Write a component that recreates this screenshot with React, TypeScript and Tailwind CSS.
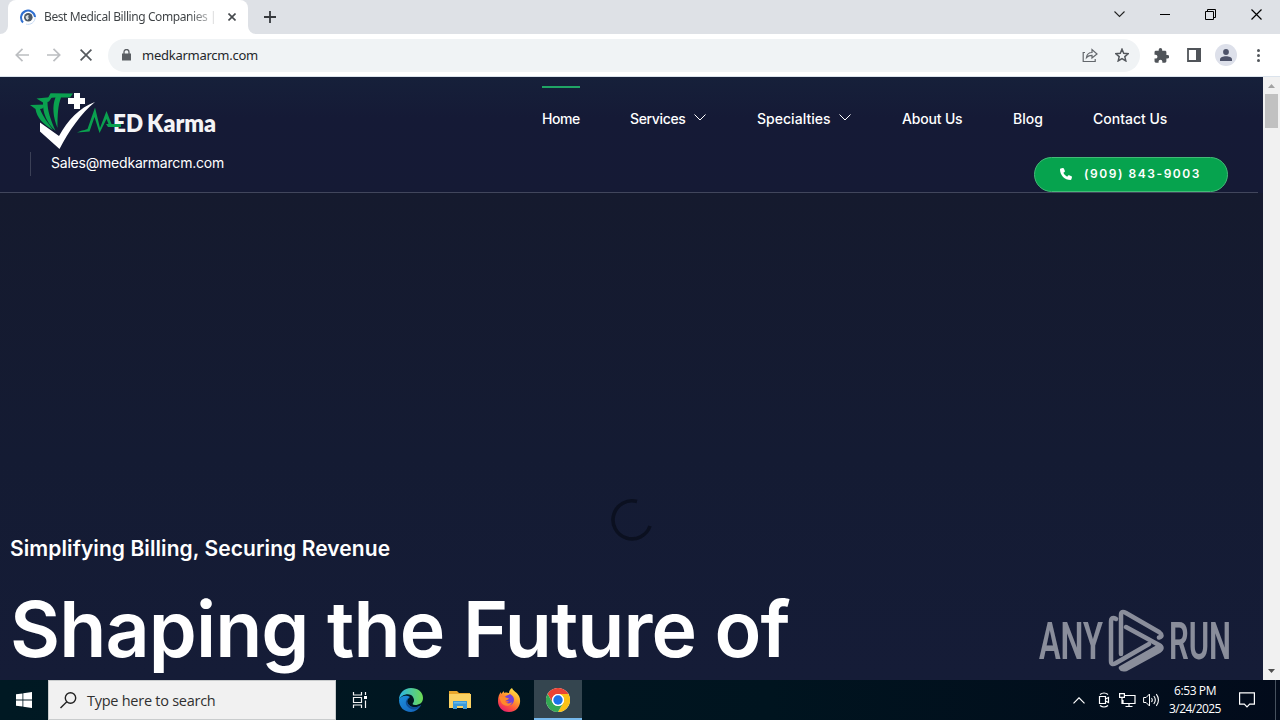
import type { ReactNode } from "react";

function Ico({ w, h, box, children, className = "" }: { w: number; h: number; box?: string; children: ReactNode; className?: string }) {
  return (
    <svg width={w} height={h} viewBox={box ?? `0 0 ${w} ${h}`} fill="none" className={`block shrink-0 ${className}`}>
      {children}
    </svg>
  );
}

function TabStrip() {
  return (
    <div className="flex h-[34px] shrink-0 items-start bg-[#dee1e6] pl-2">
      <div className="relative flex h-[34px] w-60 items-center rounded-t-lg bg-white pl-3">
        <Ico w={8} h={8} className="absolute -left-2 bottom-0"><path d="M8 0v8H0a8 8 0 0 0 8-8z" fill="#fff" /></Ico>
        <Ico w={8} h={8} className="absolute -right-2 bottom-0"><path d="M0 0v8h8a8 8 0 0 1-8-8z" fill="#fff" /></Ico>
        <Ico w={16} h={16}>
          <path d="M3 13.500A7 7 0 1 1 15 8" stroke="#2f6fd0" strokeWidth="2" />
          <path d="M6 15.1A7.2 7.2 0 0 0 15.2 8" stroke="#c5d9f5" strokeWidth="1" />
          <circle cx="8.300" cy="8.300" r="4.300" fill="#4d5966" />
          <path d="M5.500 7.500l2-1.500 1.500.6-1 1.500 1 1.200-1.500 1.700-1.500-1.200z" fill="#d5dde2" />
        </Ico>
        <div className="ml-2 w-[176px] whitespace-nowrap bg-linear-to-r from-[#3c4043] from-82% to-transparent to-100% bg-clip-text font-['Noto_Sans',sans-serif] text-[12px] leading-4 tracking-[-0.420px] text-transparent">
          Best Medical Billing Companies |
        </div>
        <Ico w={8} h={8} className="ml-2"><path d="M.5.5l7 7M7.5.5l-7 7" stroke="#45494d" strokeWidth="1.6" /></Ico>
      </div>
      <Ico w={12} h={12} className="mt-[11px] ml-4"><path d="M6 0v12M0 6h12" stroke="#36393d" strokeWidth="1.8" /></Ico>
      <div className="flex-1" />
      <div className="flex h-7 items-center gap-[35px] pr-[18px]">
        <Ico w={11} h={7}><path d="M.5.5l5 5 5-5" stroke="#222" strokeWidth="1.1" /></Ico>
        <Ico w={10} h={2}><path d="M0 1.500h10" stroke="#000" /></Ico>
        <Ico w={11} h={11}><path d="M.5 2.500h8v8h-8zM2.500 2.500v-2h8v8h-2" stroke="#000" /></Ico>
        <Ico w={11} h={11}><path d="M.5.5l10 10M10.500.5l-10 10" stroke="#000" strokeWidth="1.2" /></Ico>
      </div>
    </div>
  );
}

function Toolbar() {
  return (
    <div className="flex h-[43px] shrink-0 items-center border-b border-[#dbe3ec] bg-white pl-[15px]">
      <Ico w={14} h={14}><path d="M14 7H1.500M7.500.8L1.300 7l6.200 6.200" stroke="#bcbec1" strokeWidth="1.700" /></Ico>
      <Ico w={14} h={14} className="ml-[18px]"><path d="M0 7h12.500M6.500.8L12.700 7l-6.200 6.200" stroke="#bcbec1" strokeWidth="1.700" /></Ico>
      <Ico w={12} h={12} className="ml-[19px]"><path d="M.6.6l10.800 10.800M11.400.6L.6 11.400" stroke="#55595e" strokeWidth="1.700" /></Ico>
      <div className="ml-4 flex h-[33px] w-[1032px] items-center rounded-full bg-[#f0f3f5] pl-[14px]">
        <Ico w={9} h={12}><path d="M0 4.500h9v7H0z" fill="#5a5e63" /><path d="M2 5V3a2.500 2.500 0 0 1 5 0v2" stroke="#5a5e63" strokeWidth="1.300" /></Ico>
        <span className="ml-[11px] font-['Noto_Sans',sans-serif] text-[13px] leading-5 tracking-[-0.260px] text-[#24272b]">medkarmarcm.com</span>
        <div className="flex-1" />
        <Ico w={16} h={14}>
          <path d="M3 4.500H1.200v9h12V11" stroke="#63676c" strokeWidth="1.200" />
          <path d="M4.500 9.500c.5-3.500 2.500-5 5.500-5V1.500l5 4.500-5 4V7.300c-2.500 0-4 .5-5.500 2.200z" stroke="#63676c" strokeWidth="1.200" />
        </Ico>
        <Ico w={14} h={14} className="mr-[11px] ml-[17px]"><path d="M7 1.200l1.700 4.100 4.500.4-3.400 2.900 1 4.300L7 10.600l-3.800 2.300 1-4.300L.8 5.700l4.500-.4z" stroke="#53575c" strokeWidth="1.500" /></Ico>
      </div>
      <Ico w={15} h={15} box="1.500 1 21 21.500" className="ml-[14px]">
        <path d="M20.500 11H19V7c0-1.100-.9-2-2-2h-4V3.500a2.500 2.500 0 0 0-5 0V5H4a2 2 0 0 0-2 2v3.800h1.500a2.700 2.700 0 0 1 0 5.400H2V20c0 1.100.9 2 2 2h3.800v-1.500a2.700 2.700 0 0 1 5.400 0V22H17c1.100 0 2-.9 2-2v-4h1.500a2.500 2.500 0 0 0 0-5z" fill="#505459" />
      </Ico>
      <Ico w={14} h={14} className="ml-[18px]"><path d="M1 1h12v12H1z" stroke="#505459" strokeWidth="1.800" /><path d="M9 0h5v14H9z" fill="#505459" /></Ico>
      <div className="ml-[14px] flex size-[22px] items-center justify-center rounded-full bg-[#dde0ea]">
        <Ico w={12} h={12}><circle cx="6" cy="3" r="2.900" fill="#4d5269" /><path d="M0 12v-1.500C0 8.300 3 7.300 6 7.300s6 1 6 3.200V12z" fill="#4d5269" /></Ico>
      </div>
      <Ico w={4} h={14} className="ml-[20px]"><circle cx="1.500" cy="2.500" r="1.500" fill="#53575c" /><circle cx="1.500" cy="7.500" r="1.500" fill="#53575c" /><circle cx="1.500" cy="12.500" r="1.500" fill="#53575c" /></Ico>
    </div>
  );
}

function Logo() {
  return (
    <svg width="188" height="60" viewBox="0 0 188 60" className="block">
      <g fill="#0aa14f">
        <path d="M20.500 .3L43 .6 40 4.600 31 4.600C28 12 27.500 22 27.500 35C23 24 22 13 25.500 4.600L18 5z" />
        <path d="M6.500 5.500L22 4 19 8.500 17.500 9C17.500 18 20.500 26 25.500 38C17 30 12.500 20 13 9.500z" />
        <path d="M0 12L15.500 11.500 12.500 15.500 10 16C12.500 23 17.500 29 23 37C13 31 7 25 5.500 16z" />
      </g>
      <path d="M44 0h6v5h5v6h-5v5h-6v-5h-6V5h6z" fill="#fff" />
      <path d="M10 29.500L29 43C38 27 49 15 65 9C51 20 39 38 29.500 56L10 38.500z" fill="#fff" />
      <g fill="#0aa14f">
        <path d="M47 39.500C52 37 56 37 57.500 36L65 14.500L70 35L76.500 18L81.500 31H91V33.500H79.500L76.500 26L69.500 40L64.500 24L59.500 38.500Z" />
      </g>
      <text x="83" y="39" textLength="30" lengthAdjust="spacingAndGlyphs" fontFamily="Lato, sans-serif" fontWeight="800" fontSize="25" fill="#f4f4f6">ED</text>
      <path d="M76 31h15v3H78z" fill="#0aa14f" />
      <text x="117" y="39" textLength="69" lengthAdjust="spacingAndGlyphs" fontFamily="Lato, sans-serif" fontWeight="800" fontSize="24.500" fill="#f4f4f6">Karma</text>
    </svg>
  );
}

function Chevron() {
  return <Ico w={12} h={7} className="mr-px mb-[3px]"><path d="M.5.5L6 6 11.500.5" stroke="#fff" /></Ico>;
}

function Header() {
  return (
    <header className="mr-[5px] h-[116px] shrink-0 border-b border-[#41465c]">
      <div className="flex h-[73px]">
        <div className="w-[542px] pt-4 pl-[30px]"><Logo /></div>
        <nav className="flex h-[84px] text-[14px] leading-5 font-medium whitespace-nowrap text-white">
          <div className="mt-[9px] w-[38px] border-t-2 border-[#20a565] pt-[21px] tracking-[-0.450px]">Home</div>
          <div className="ml-[50px] flex h-[84px] w-[77px] items-center justify-between"><span className="tracking-[-0.360px]">Services</span><Chevron /></div>
          <div className="ml-[50px] flex h-[84px] w-[95px] items-center justify-between"><span className="tracking-[0.030px]">Specialties</span><Chevron /></div>
          <div className="ml-[50px] flex w-[61px] items-center tracking-[-0.180px]">About Us</div>
          <div className="ml-[50px] flex w-[30px] items-center tracking-[0.050px]">Blog</div>
          <div className="ml-[50px] flex w-[75px] items-center tracking-[0px]">Contact Us</div>
        </nav>
      </div>
      <div className="flex items-start justify-between pr-[30px] pl-[30px]">
        <div className="mt-[2px] flex h-6 border-l border-[#3b4056] pl-5 text-[14px] leading-[22px] font-normal tracking-[-0.210px] whitespace-nowrap text-white">Sales@medkarmarcm.com</div>
        <div className="mt-[7px] flex h-[35px] w-[194px] items-center rounded-full border border-[#43bb77] bg-[#06a34e] pb-px pl-[25px]">
          <Ico w={12} h={12} box="0 0 512 512"><path d="M164.900 24.600c-7.700-18.600-28-28.500-47.400-23.200l-88 24C12.100 30.200 0 46 0 64c0 247.400 200.600 448 448 448 18 0 33.800-12.100 38.600-29.500l24-88c5.300-19.400-4.600-39.700-23.200-47.400l-96-40c-16.300-6.800-35.200-2.100-46.300 11.600L304.700 368C234.300 334.700 177.300 277.700 144 207.300l49.300-40.300c13.700-11.200 18.400-30 11.600-46.300z" fill="#fff" /></Ico>
          <span className="ml-3 text-[12px] leading-4 font-semibold tracking-[1.550px] whitespace-nowrap text-white">(909) 843-9003</span>
        </div>
      </div>
    </header>
  );
}

function Watermark() {
  return (
    <svg width="200" height="72" viewBox="0 0 200 72" className="absolute right-[25px] bottom-0 opacity-50">
      <text x="1" y="51" textLength="64" lengthAdjust="spacingAndGlyphs" fontFamily="Roboto, sans-serif" fontWeight="600" fontSize="51" fill="#fff">ANY</text>
      <text x="131" y="51" textLength="62" lengthAdjust="spacingAndGlyphs" fontFamily="Roboto, sans-serif" fontWeight="600" fontSize="51" fill="#fff">RUN</text>
      <g fill="none" stroke="#fff" strokeWidth="4.500" strokeLinejoin="round" strokeLinecap="round">
        <path d="M78 11Q73 8 73 14V53Q73 58 78 55L111 36" />
        <path d="M83 46V7Q83 2 88 5L121 24Q126 28 121 29.500" />
        <path d="M88 19L121 37Q126 40 121 43L88 61Q84 62 83 60L120 39" />
      </g>
    </svg>
  );
}

function Page() {
  return (
    <div className="flex min-h-0 flex-1">
      <main className="relative flex w-[1263px] flex-col overflow-hidden bg-[#151b36] font-[Inter,sans-serif]">
        <div className="bg-linear-to-b from-[#16203a] via-[#151a36] via-35% to-[#151a35]"><Header /></div>
        <section className="flex-1 bg-linear-to-b from-[#151a2e] via-[#141b33] via-55% to-[#151c37] pl-[10px]">
          <div className="h-[341px]" />
          <p className="text-[21px] leading-[30px] font-semibold tracking-[0.080px] whitespace-nowrap text-white">Simplifying Billing, Securing Revenue</p>
          <h1 className="mt-[15px] text-[77px] leading-[100px] font-semibold tracking-[-0.900px] whitespace-nowrap text-white">Shaping the Future of</h1>
        </section>
        <Ico w={44} h={44} className="absolute top-[421px] left-[609px]"><path d="M28 3.500A19 19 0 1 0 41 28" stroke="#0b1020" strokeWidth="3.600" /></Ico>
        <Watermark />
      </main>
      <div className="flex w-[17px] flex-col items-center bg-[#f1f1f1]">
        <Ico w={17} h={17}><path d="M5 11l3.500-4 3.500 4z" fill="#a3a3a3" /></Ico>
        <div className="h-[34px] w-[13px] bg-[#c1c1c1]" />
        <div className="flex-1" />
        <Ico w={17} h={17}><path d="M5 6l3.500 4L12 6z" fill="#505050" /></Ico>
      </div>
    </div>
  );
}

function Edge() {
  return (
    <Ico w={24} h={24}>
      <defs>
        <linearGradient id="edgeTop" x1="0" y1="0" x2="1" y2="0"><stop offset="0" stopColor="#2bb5e8" /><stop offset="1" stopColor="#6edb52" /></linearGradient>
        <linearGradient id="edgeBody" x1="0" y1="0" x2="1" y2="1"><stop offset="0" stopColor="#1c8fdc" /><stop offset="1" stopColor="#1460b8" /></linearGradient>
      </defs>
      <path d="M0 12C2 7 8 7 11 9c-3 2-4 5-1 8 3 3 8 3 12 0-2 4-6 7-10 7C5 24 0 19 0 12z" fill="url(#edgeBody)" />
      <path d="M11 9c-3 2-4 5-1 8 3 3 8 3 12 0-3 5-9 6-13 2-4-4-2-8 2-10z" fill="#0f4d97" />
      <path d="M0 12C0 5 5 0 12 0s12 4 12 10c0 5-4 7-8 7-2 0-3-1-2-2 2-2 1-6-2-8C8 5 2 7 0 12z" fill="url(#edgeTop)" />
    </Ico>
  );
}

function Explorer() {
  return (
    <Ico w={22} h={20}>
      <path d="M0 1h8l2 2h11v5H0z" fill="#e9a72c" />
      <path d="M0 4h22v14H0z" fill="#fbd263" />
      <path d="M4 11h14v8h-4v-3H8v3H4z" fill="#3b9ada" />
      <path d="M5 12h12v1.500H5z" fill="#66b8e8" />
    </Ico>
  );
}

function Firefox() {
  return (
    <Ico w={24} h={24}>
      <defs>
        <linearGradient id="fox" x1=".85" y1="0" x2=".25" y2="1"><stop offset="0" stopColor="#fff04d" /><stop offset=".4" stopColor="#ffa22d" /><stop offset=".7" stopColor="#ff563c" /><stop offset="1" stopColor="#e51c70" /></linearGradient>
      </defs>
      <path d="M15 0c1 3 5 4 7 8 3 6 0 16-10 16C5 24 1 19 1 13c0-4 1-7 3-9v2l3-3v2c2-1 4 0 5 0 0-2 1-4 3-5z" fill="url(#fox)" />
      <path d="M7 10c2-3 5-3 6-4 4 2 5 6 3 9-2 3-7 3-9 0 2 0 4 0 5-2-3 1-4-1-5-3z" fill="#7341d5" />
      <path d="M2 9c3-2 7 1 9 1 1 0 1 1 0 1.500L8 13c1 3 5 3 7 1-1 5-9 5-11 0z" fill="#ff8a2c" />
    </Ico>
  );
}

function Chrome() {
  return (
    <Ico w={24} h={24}>
      <circle cx="12" cy="12" r="12" fill="#fff" />
      <path d="M1.600 6A12 12 0 0 1 22.400 6H12a6 6 0 0 0-5.200 9z" fill="#ea4335" />
      <path d="M22.400 6A12 12 0 0 1 12 24l5.200-9A6 6 0 0 0 12 6z" fill="#fbc116" />
      <path d="M1.600 6A12 12 0 0 0 12 24l5.200-9A6 6 0 0 1 6.800 15z" fill="#34a853" />
      <circle cx="12" cy="12" r="6" fill="#fff" />
      <circle cx="12" cy="12" r="4.700" fill="#1a73e8" />
    </Ico>
  );
}

function Taskbar() {
  return (
    <div className="flex h-10 shrink-0 items-center bg-linear-to-r from-[#001923] via-[#00141f] via-60% to-[#020b1b] text-white">
      <div className="flex w-12 shrink-0 justify-center">
        <Ico w={16} h={16}><path d="M0 2.300l6.500-.9v6.200H0zM7.300 1.300L16 0v7.600H7.300zM0 8.400h6.500v6.200L0 13.700zM7.300 8.400H16V16l-8.700-1.300z" fill="#fff" /></Ico>
      </div>
      <div className="flex h-10 w-72 shrink-0 items-center border border-[#c9cccd] bg-[#f1f1f1] pl-[11px]">
        <Ico w={17} h={17}><circle cx="10.500" cy="6" r="5.200" stroke="#222" strokeWidth="1.400" /><path d="M6.800 9.800L.5 16" stroke="#222" strokeWidth="1.400" /></Ico>
        <span className="mt-px ml-[10px] font-['Open_Sans',sans-serif] text-[14.500px] leading-5 tracking-[-0.260px] text-[#303030]">Type here to search</span>
      </div>
      <div className="flex w-12 shrink-0 justify-center">
        <Ico w={16} h={16}><path d="M1.500 0v3h8V0M1.500 16v-3h8v3M1.500 5.500h8v5h-8zM13.500 0v3M13.500 8.500V16" stroke="#f4f4f4" strokeWidth="1.200" /><path d="M12 4h3v3h-3z" fill="#fff" /></Ico>
      </div>
      <div className="ml-[3px] flex w-12 shrink-0 justify-center"><Edge /></div>
      <div className="ml-px flex w-12 shrink-0 justify-center"><Explorer /></div>
      <div className="ml-px flex w-12 shrink-0 justify-center"><Firefox /></div>
      <div className="ml-px flex h-10 w-12 shrink-0 items-center justify-center border-b-2 border-[#76b9ed] bg-[#34454f] pt-[2px]"><Chrome /></div>
      <div className="flex-1" />
      <Ico w={12} h={7}><path d="M.5 6.300L6 .8l5.500 5.500" stroke="#fff" strokeWidth="1.200" /></Ico>
      <Ico w={12} h={16} className="ml-[13px]"><path d="M2 2.500q4-3 8 0M2 13.500q4 3 8 0" stroke="#fff" strokeWidth="1.200" /><path d="M1.500 4.500h6v7h-6zM7.500 7l3-1.500v5L7.500 9" stroke="#fff" strokeWidth="1.200" /></Ico>
      <Ico w={17} h={15} className="ml-[9px]"><path d="M5 2.500h11v8H4V7M10 10.500V14M6.500 13.500h7M.6.6h4.800v3.800H.6zM3 4.500V11" stroke="#fff" strokeWidth="1.200" /></Ico>
      <Ico w={17} h={14} className="ml-[7px]"><path d="M.6 4.500h2.500L6.500 1v12L3.100 9.500H.6z" stroke="#fff" /><path d="M8.500 5q1.500 2 0 4M10.800 3q3 4 0 8M13.300 1.200q4.300 5.800 0 11.600" stroke="#fff" strokeWidth="1.100" /></Ico>
      <div className="ml-[3px] flex w-[64px] flex-col items-center font-['Open_Sans',sans-serif] text-[12px] leading-[18px] whitespace-nowrap">
        <span className="tracking-[-0.400px]">6:53 PM</span>
        <span className="tracking-[-0.550px]">3/24/2025</span>
      </div>
      <Ico w={16} h={16} className="ml-[12px]"><path d="M.6.8h14.800v11.400h-4.700L8 15l-2.700-2.800H.6z" stroke="#fff" strokeWidth="1.200" /></Ico>
      <div className="ml-5 mr-1 h-10 w-px bg-[#46515e]" />
    </div>
  );
}

export default function App() {
  return (
    <div className="flex h-[720px] w-[1280px] flex-col overflow-hidden">
      <TabStrip />
      <Toolbar />
      <Page />
      <Taskbar />
    </div>
  );
}
